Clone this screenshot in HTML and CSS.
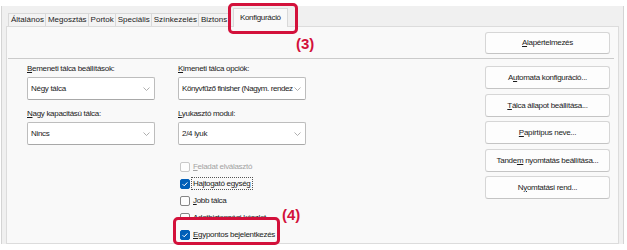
FILE: index.html
```html
<!DOCTYPE html>
<html lang="hu">
<head>
<meta charset="utf-8">
<title>Konfiguráció</title>
<link rel="stylesheet" href="styles.css">
</head>
<body>
<div class="frame">
  <div class="tabs">
    <div class="tab">Általános</div>
    <div class="tab">Megosztás</div>
    <div class="tab">Portok</div>
    <div class="tab">Speciális</div>
    <div class="tab">Színkezelés</div>
    <div class="tab tab-cut">Biztons</div>
    <div class="tab tab-active">Konfiguráció</div>
  </div>
  <div class="panel">
    <div class="panel-top">
      <button class="btn btn-top"><u>A</u>lapértelmezés</button>
    </div>
    <div class="panel-body">
      <div class="form">
        <div class="fields">
          <div class="field">
            <div class="label"><u>B</u>emeneti tálca beállítások:</div>
            <div class="select"><span class="select-text">Négy tálca</span><svg class="chev" width="7" height="4" viewBox="0 0 7 4"><polyline points="0.5,0.5 3.5,3.5 6.5,0.5" fill="none" stroke="#9a9a9a" stroke-width="0.8"/></svg></div>
          </div>
          <div class="field">
            <div class="label"><u>K</u>imeneti tálca opciók:</div>
            <div class="select"><span class="select-text select-long">Könyvfűző finisher (Nagym. rendez</span><svg class="chev" width="7" height="4" viewBox="0 0 7 4"><polyline points="0.5,0.5 3.5,3.5 6.5,0.5" fill="none" stroke="#9a9a9a" stroke-width="0.8"/></svg></div>
          </div>
          <div class="field">
            <div class="label"><u>N</u>agy kapacitású tálca:</div>
            <div class="select"><span class="select-text">Nincs</span><svg class="chev" width="7" height="4" viewBox="0 0 7 4"><polyline points="0.5,0.5 3.5,3.5 6.5,0.5" fill="none" stroke="#9a9a9a" stroke-width="0.8"/></svg></div>
          </div>
          <div class="field">
            <div class="label"><u>L</u>yukasztó modul:</div>
            <div class="select"><span class="select-text">2/4 lyuk</span><svg class="chev" width="7" height="4" viewBox="0 0 7 4"><polyline points="0.5,0.5 3.5,3.5 6.5,0.5" fill="none" stroke="#9a9a9a" stroke-width="0.8"/></svg></div>
          </div>
        </div>
        <div class="checks">
          <div class="check check-disabled"><span class="box"></span><span class="check-label"><u>F</u>eladat elválasztó</span></div>
          <div class="check"><span class="box box-on"><svg width="8" height="8" viewBox="0 0 8 8"><polyline points="1.6,4.2 3.2,5.8 6.4,2.4" fill="none" stroke="#fff" stroke-width="1"/></svg></span><span class="check-label focus">Ha<u>j</u>togató egység</span></div>
          <div class="check"><span class="box"></span><span class="check-label"><u>J</u>obb tálca</span></div>
          <div class="check"><span class="box"></span><span class="check-label"><u>A</u>datbiztonsági készlet</span></div>
          <div class="check check-top"><span class="box box-on"><svg width="8" height="8" viewBox="0 0 8 8"><polyline points="1.6,4.2 3.2,5.8 6.4,2.4" fill="none" stroke="#fff" stroke-width="1"/></svg></span><span class="check-label"><u>E</u>gypontos bejelentkezés</span></div>
        </div>
      </div>
      <div class="buttons">
        <button class="btn">A<u>u</u>tomata konfiguráció...</button>
        <button class="btn"><u>T</u>álca állapot beállítása...</button>
        <button class="btn"><u>P</u>apírtípus neve...</button>
        <button class="btn">Tande<u>m</u> nyomtatás beállítása...</button>
        <button class="btn">N<u>y</u>omtatási rend...</button>
      </div>
    </div>
  </div>
</div>
<div class="callout callout-3"></div>
<div class="marker marker-3">(3)</div>
<div class="callout callout-4"></div>
<div class="marker marker-4">(4)</div>
</body>
</html>
```

FILE: styles.css
```css
* { box-sizing: border-box; }

body {
  margin: 0;
  background: #ffffff;
  font-family: "Liberation Sans", Arial, sans-serif;
  font-size: 8px;
  color: #1b1b1b;
  width: 627px;
  height: 250px;
  overflow: hidden;
  position: relative;
}

u { text-decoration: underline; text-underline-offset: 1px; }

.frame {
  margin: 6px 3px 0 1px;
  height: 238px;
  background: #f0f0f0;
  border-left: 1px solid #d4d4d4;
  border-right: 1px solid #d4d4d4;
  padding: 0 4px;
  display: flex;
  flex-direction: column;
}

.tabs {
  height: 20px;
  display: flex;
  align-items: flex-end;
  padding-left: 2px;
}

.tab {
  height: 13px;
  line-height: 12px;
  padding: 0 1px 0 2px;
  background: #f3f3f3;
  border: 1px solid #d9d9d9;
  border-right: none;
  border-bottom: none;
  white-space: nowrap;
  color: #1b1b1b;
}

.tab-cut {
  width: 30px;
}

.tab-active {
  position: relative;
  z-index: 1;
  height: 19px;
  margin-left: 5px;
  margin-bottom: -1px;
  padding: 3px 6px 0 6px;
  line-height: 11px;
  letter-spacing: -0.3px;
  background: #f9f9f9;
  border-right: 1px solid #d9d9d9;
}

.panel {
  height: 218px;
  background: #f9f9f9;
  border: 1px solid #dcdcdc;
  display: flex;
  flex-direction: column;
}

.panel-top {
  height: 32px;
  margin: 0 4px 0 1px;
  border-bottom: 1px solid #cbcbcb;
  display: flex;
  justify-content: flex-end;
  align-items: flex-start;
  padding: 5px 4px 0 0;
}

.btn {
  width: 125px;
  height: 23px;
  padding: 0;
  margin: 0;
  font-family: inherit;
  font-size: 8px;
  letter-spacing: -0.3px;
  color: #1b1b1b;
  background: #fdfdfd;
  border: 1px solid #d6d6d6;
  border-bottom-color: #c4c4c4;
  border-radius: 3px;
  text-align: center;
  line-height: 21px;
}

.btn-top { height: 22px; line-height: 20px; }

.panel-body {
  flex: 1;
  display: flex;
  justify-content: space-between;
}

.form {
  padding: 5px 0 0 20px;
}

.fields {
  display: grid;
  grid-template-columns: 128px 128px;
  column-gap: 23px;
  row-gap: 9px;
}

.label {
  height: 10px;
  line-height: 10px;
  margin-bottom: 3px;
  letter-spacing: -0.3px;
  white-space: nowrap;
}

.select {
  height: 23px;
  background: #ffffff;
  border: 1px solid #bdbdbd;
  border-bottom-color: #a8a8a8;
  border-radius: 2px;
  display: flex;
  align-items: center;
  padding: 0 3px 0 3px;
}

.select-text {
  flex: 1;
  white-space: nowrap;
  letter-spacing: -0.3px;
}

.select-long { letter-spacing: -0.42px; }

.chev { flex: none; margin-left: 1px; margin-right: 1px; }

.checks {
  margin: 13px 0 0 153px;
  display: flex;
  flex-direction: column;
}

.check {
  height: 17px;
  display: flex;
  align-items: center;
  letter-spacing: -0.3px;
  white-space: nowrap;
}

.check-top { position: relative; z-index: 3; }

.box {
  width: 10px;
  height: 10px;
  border: 1px solid #858585;
  border-radius: 2px;
  background: #fdfdfd;
  margin-right: 2px;
  display: flex;
  align-items: center;
  justify-content: center;
  flex: none;
}

.box-on {
  background: #005fb8;
  border-color: #005fb8;
}

.check-disabled { color: #a3a3a3; }
.check-disabled .box { border-color: #c8c8c8; }

.check-label { padding: 0 1px; line-height: 11px; }

.focus { outline: 1px dotted #555; outline-offset: 0; }

.buttons {
  margin: 7px 8px 0 0;
  display: flex;
  flex-direction: column;
  gap: 4.5px;
}

.callout {
  position: absolute;
  border: 3px solid #d3113b;
  border-radius: 5px;
  z-index: 2;
}

.callout-3 { left: 228px; top: 3px; width: 70px; height: 31px; }

.callout-4 {
  left: 173px; top: 217px; width: 107px; height: 28px;
  background: #f9f9f9;
}

.marker {
  position: absolute;
  font-size: 15px;
  font-weight: bold;
  color: #d3113b;
  line-height: 15px;
  z-index: 4;
}

.marker-3 { left: 296px; top: 36px; }
.marker-4 { left: 282px; top: 207px; }
```
